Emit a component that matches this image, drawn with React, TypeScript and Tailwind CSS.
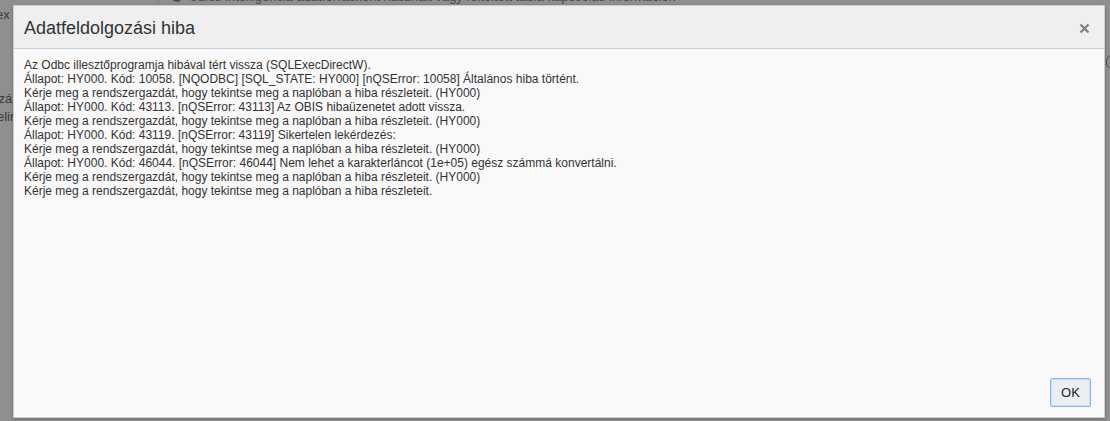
import React from "react";

const lines = [
  "Az Odbc illesztőprogramja hibával tért vissza (SQLExecDirectW).",
  "Állapot: HY000. Kód: 10058. [NQODBC] [SQL_STATE: HY000] [nQSError: 10058] Általános hiba történt.",
  "Kérje meg a rendszergazdát, hogy tekintse meg a naplóban a hiba részleteit. (HY000)",
  "Állapot: HY000. Kód: 43113. [nQSError: 43113] Az OBIS hibaüzenetet adott vissza.",
  "Kérje meg a rendszergazdát, hogy tekintse meg a naplóban a hiba részleteit. (HY000)",
  "Állapot: HY000. Kód: 43119. [nQSError: 43119] Sikertelen lekérdezés:",
  "Kérje meg a rendszergazdát, hogy tekintse meg a naplóban a hiba részleteit. (HY000)",
  "Állapot: HY000. Kód: 46044. [nQSError: 46044] Nem lehet a karakterláncot (1e+05) egész számmá konvertálni.",
  "Kérje meg a rendszergazdát, hogy tekintse meg a naplóban a hiba részleteit. (HY000)",
  "Kérje meg a rendszergazdát, hogy tekintse meg a naplóban a hiba részleteit.",
];

export default function App() {
  return (
    <div
      className="relative w-[1110px] h-[421px] overflow-hidden bg-[#8f8f8f]"
      style={{ fontFamily: '"Liberation Sans", Arial, sans-serif' }}
    >
      {/* faint background page behind the modal overlay */}
      <div className="flex h-full text-[13px] text-[#3a3a3a]">
        <div className="w-[162px] shrink-0 flex flex-col pt-[6px] leading-[18px] -ml-[4px]">
          <span>ex</span>
          <span className="mt-[66px] -ml-[4px]">szá</span>
          <span className="ml-[1px]">elin</span>
        </div>
        <div className="flex-1 flex flex-col">
          <div className="flex items-center gap-[7px] h-[12px] -mt-[9px] border-l border-[#7a7a7a] pl-[13px]">
            <span className="w-[10px] h-[10px] rounded-full bg-[#4a4a4a]" />
            <span className="whitespace-nowrap text-[#4a4a4a]">
              Üzleti intelligencia adatforrásként használt vagy feltöltött tábla kapcsolati információk
            </span>
          </div>
          <div className="flex justify-end mt-[52px] -mr-[8px]">
            <span className="w-[12px] h-[14px] rounded-full border border-[#4a4a4a]" />
          </div>
        </div>
      </div>

      {/* modal dialog over the page */}
      <div className="absolute left-[13px] top-[5px] w-[1092px] h-[413px] flex flex-col bg-[#f9f9f9] border border-[#c7cfd8] shadow-[0_1px_3px_rgba(0,0,0,0.25)]">
        <div className="h-[43px] shrink-0 flex items-center justify-between bg-[#efefef] border-b border-[#c3cfdc] pl-[10px] pr-[14px]">
          <span className="text-[18px] text-[#333333] leading-none pt-[2px]">Adatfeldolgozási hiba</span>
          <svg width="11" height="11" viewBox="0 0 11 11" className="mt-[2px]">
            <path d="M1.5 1.5 L9.5 9.5 M9.5 1.5 L1.5 9.5" stroke="#7b7f86" strokeWidth="2.2" />
          </svg>
        </div>
        <div className="flex-1 pl-[10px] pt-[9px] text-[12px] leading-[14px] text-[#333333]">
          {lines.map((l, i) => (
            <div key={i} className="whitespace-nowrap">{l}</div>
          ))}
        </div>
        <div className="flex justify-end pr-[13px] pb-[10px]">
          <button className="w-[41px] h-[29px] text-[13px] text-[#222222] bg-[#eceff2] border border-[#8fb5ef] rounded-[2px] shadow-[inset_0_0_0_1px_#c9dcf7]">
            OK
          </button>
        </div>
      </div>
    </div>
  );
}
